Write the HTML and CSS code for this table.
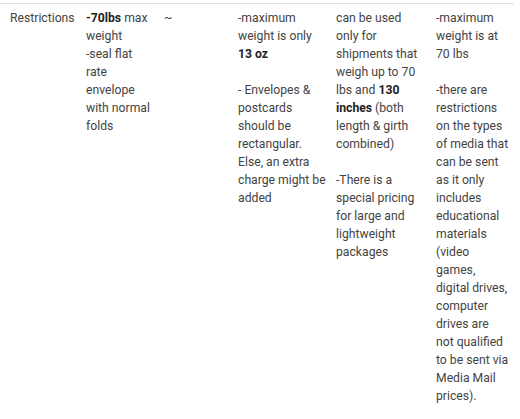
FILE: index.html
```html
<!DOCTYPE html>
<html>
<head>
<meta charset="utf-8">
<link rel="stylesheet" href="styles.css">
</head>
<body>
<div class="table">
  <div class="cell c1">Restrictions</div>
  <div class="cell c2"><b>-70lbs</b> max weight<br>-seal flat rate envelope with normal folds</div>
  <div class="cell c3">~</div>
  <div class="cell c4">
    <p>-maximum weight is only <b>13 oz</b></p>
    <p>- Envelopes &amp; postcards should be rectangular. Else, an extra charge might be added</p>
  </div>
  <div class="cell c5">
    <p>can be used only for shipments that weigh up to 70 lbs and <b>130 inches</b> (both length &amp; girth combined)</p>
    <p>-There is a special pricing for large and lightweight packages</p>
  </div>
  <div class="cell c6">
    <p>-maximum weight is at 70 lbs</p>
    <p>-there are restrictions on the types of media that can be sent as it only includes educational materials (video games, digital drives, computer drives are not qualified to be sent via Media Mail prices).</p>
  </div>
</div>
</body>
</html>
```

FILE: styles.css
```css
html, body {
  margin: 0;
  padding: 0;
  background: #ffffff;
}
body {
  font-family: Roboto, "Liberation Sans", sans-serif;
  font-size: 12.2px;
  line-height: 18px;
  color: #444444;
  padding-top: 3px;
}
.table {
  display: grid;
  grid-template-columns: 76px 78px 74px 98px 100px 88px;
  border-top: 1px solid #e2e2e2;
  width: 514px;
}
.cell {
  padding: 5px 0 0 10px;
}
.cell p {
  margin: 0 0 18px 0;
}
.cell p:last-child {
  margin-bottom: 0;
}
.cell b {
  color: #222222;
  font-weight: 700;
}
.c2 { padding-right: 3px; }
.c3 { padding-right: 10px; }
.c4 { padding-right: 0; }
.c5 { padding-right: 8px; }
.c6 { padding-right: 5px; }
```
